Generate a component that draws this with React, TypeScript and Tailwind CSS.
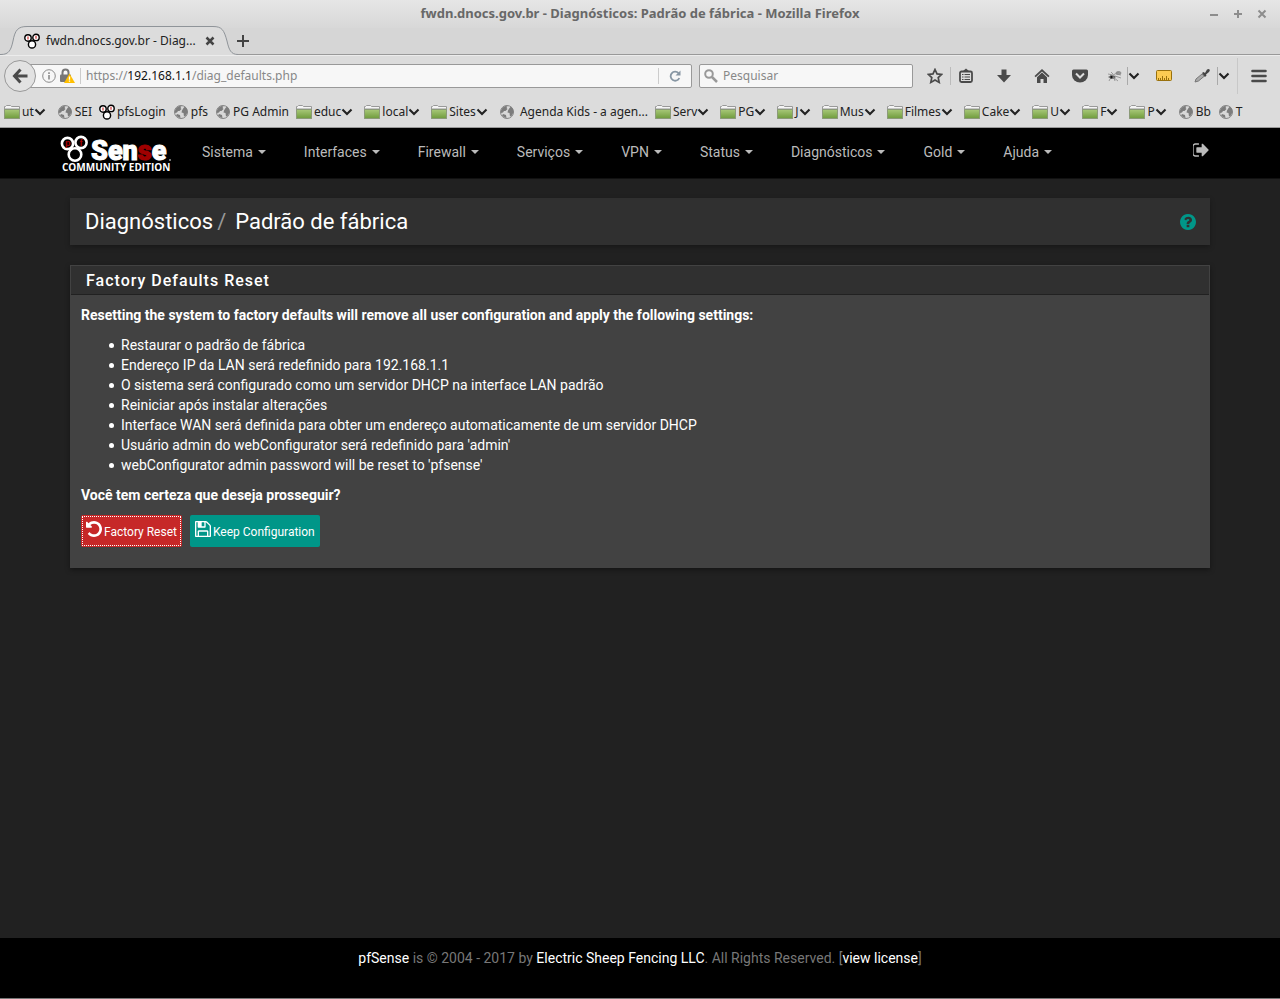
import React from "react";

type IconProps = { className?: string };

const FA = {
  signOut:
    "M704 1440q0 4 1 20t.5 26.5-3 23.5-10 19.5-20.5 6.5h-320q-119 0-203.5-84.5t-84.5-203.5v-704q0-119 84.5-203.5t203.5-84.5h320q13 0 22.5 9.5t9.5 22.5q0 4 1 20t.5 26.5-3 23.5-10 19.5-20.5 6.5h-320q-66 0-113 47t-47 113v704q0 66 47 113t113 47h312l11.5 1 11.5 3 8 5.5 7 9 2 13.5zm928-544q0 26-19 45l-544 544q-19 19-45 19t-45-19-19-45v-288h-448q-26 0-45-19t-19-45v-384q0-26 19-45t45-19h448v-288q0-26 19-45t45-19 45 19l544 544q19 19 19 45z",
  help: "M1024 1376v-192q0-14-9-23t-23-9h-192q-14 0-23 9t-9 23v192q0 14 9 23t23 9h192q14 0 23-9t9-23zm256-672q0-88-55.5-163t-138.5-116-170-41q-243 0-371 213-15 24 8 42l132 100q7 6 19 6 16 0 25-12 53-68 86-92 34-24 86-24 48 0 85.5 26t37.5 59q0 38-20 61t-68 45q-63 28-115.5 86.5t-52.5 125.5v36q0 14 9 23t23 9h192q14 0 23-9t9-23q0-19 21.5-49.5t54.5-49.5q32-18 49-28.5t46-35 44.5-48 28-60.5 12.5-81zm384 192q0 209-103 385.5t-279.5 279.5-385.5 103-385.5-103-279.5-279.5-103-385.5 103-385.5 279.5-279.5 385.5-103 385.5 103 279.5 279.5 103 385.5z",
  undo: "M1664 896q0 156-61 298t-164 245-245 164-298 61q-172 0-327-72.5t-264-204.5q-7-10-6.5-22.5t8.5-20.5l137-138q10-9 25-9 16 2 23 12 73 95 179 147t225 52q104 0 198.5-40.5t163.5-109.5 109.5-163.5 40.5-198.5-40.5-198.5-109.5-163.5-163.5-109.5-198.5-40.5q-98 0-188 35.5t-160 101.5l137 138q31 30 14 69-17 40-59 40h-448q-26 0-45-19t-19-45v-448q0-42 40-59 39-17 69 14l130 129q107-101 244.5-156.5t284.5-55.5q156 0 298 61t245 164 164 245 61 298z",
  save: "M512 1536h768v-384h-768v384zm896 0h128v-896q0-14-10-38.5t-20-34.5l-281-281q-10-10-34-20t-39-10v416q0 40-28 68t-68 28h-576q-40 0-68-28t-28-68v-416h-128v1280h128v-416q0-40 28-68t68-28h832q40 0 68 28t28 68v416zm-384-928v-320q0-13-9.5-22.5t-22.5-9.5h-192q-13 0-22.5 9.5t-9.5 22.5v320q0 13 9.5 22.5t22.5 9.5h192q13 0 22.5-9.5t9.5-22.5zm640 32v928q0 40-28 68t-68 28h-1344q-40 0-68-28t-28-68v-1344q0-40 28-68t68-28h928q40 0 88 20t76 48l280 280q28 28 48 76t20 88z",
};

function Fa({ d, className }: { d: string; className?: string }) {
  return (
    <svg viewBox="128 128 1536 1536" className={className} fill="currentColor" aria-hidden="true">
      <path d={d} />
    </svg>
  );
}

function Rings({ className }: IconProps) {
  return (
    <svg viewBox="0 0 16 16" className={className} fill="#fff" stroke="#000" strokeWidth="1.4" aria-hidden="true">
      <circle cx="8" cy="11.4" r="3.6" />
      <circle cx="4" cy="5" r="3.2" />
      <circle cx="12" cy="4.4" r="3.2" />
      <path d="M4 3.500v3M12 2.800v3" stroke="#c33" strokeWidth="1.2" />
    </svg>
  );
}

function Folder() {
  return (
    <svg viewBox="0 0 16 14" className="h-3.5 w-4 shrink-0" aria-hidden="true">
      <defs>
        <linearGradient id="folderGreen" x1="0" y1="0" x2="0" y2="1">
          <stop offset="0" stopColor="#a8c878" />
          <stop offset="1" stopColor="#6f9b3c" />
        </linearGradient>
      </defs>
      <path d="M.5 13.500V1.500h1l1-1h4l1 1h8v12z" fill="#f4f4f4" stroke="#999" />
      <path d="M1 3.500h14" stroke="#c5c5c5" />
      <path d="M.5 4.500h15v9H.5z" fill="url(#folderGreen)" stroke="#8b9a78" />
    </svg>
  );
}

function Globe() {
  return (
    <svg viewBox="0 0 16 16" className="h-4 w-4 shrink-0" aria-hidden="true">
      <circle cx="8" cy="8" r="6.500" fill="#d8d8d8" stroke="#858585" />
      <path
        d="M2 6.500q1-3.500 4.500-4.500l2 .5-1 1.500 1 1-2 2-1.500 0-1 1.500-2 .5zM9 6.500l1.500-2.500 1.500-1.500q2.500 2 2.500 5.500l-1.500 3.500-2 1-.5-3.500-2-.5zM4 10l3 1 .5 3-2-.5-2.500-2z"
        fill="#7c7c7c"
      />
    </svg>
  );
}

function Chevron() {
  return (
    <svg viewBox="0 0 12 8" className="h-2 w-3 shrink-0" fill="none" stroke="#222" strokeWidth="2.100" aria-hidden="true">
      <path d="M1.500 1.500L6 6l4.500-4.500" />
    </svg>
  );
}

type Bookmark = { label: string; kind: "folder" | "globe" | "rings" };
const bookmarks: Bookmark[] = [
  { label: "ut", kind: "folder" },
  { label: "SEI", kind: "globe" },
  { label: "pfsLogin", kind: "rings" },
  { label: "pfs", kind: "globe" },
  { label: "PG Admin", kind: "globe" },
  { label: "educ", kind: "folder" },
  { label: "local", kind: "folder" },
  { label: "Sites", kind: "folder" },
  { label: "\u00a0Agenda Kids - a agen...", kind: "globe" },
  { label: "Serv", kind: "folder" },
  { label: "PG", kind: "folder" },
  { label: "J", kind: "folder" },
  { label: "Mus", kind: "folder" },
  { label: "Filmes", kind: "folder" },
  { label: "Cake", kind: "folder" },
  { label: "U", kind: "folder" },
  { label: "F", kind: "folder" },
  { label: "P", kind: "folder" },
  { label: "Bb", kind: "globe" },
  { label: "T", kind: "globe" },
];

function TitleBar() {
  return (
    <div className="flex h-7 items-center bg-linear-to-b from-[#e6e6e6] to-[#d8d8d8] px-2">
      <div className="w-16" />
      <div className="flex-1 text-center text-[13px] font-bold text-[#686868]">
        fwdn.dnocs.gov.br - Diagnósticos: Padrão de fábrica - Mozilla Firefox
      </div>
      <div className="flex w-16 items-center justify-end gap-3.5 pr-[5px] text-[#8d8d8d]">
        {[
          ["Minimizar", "M1 6h8"],
          ["Maximizar", "M1 5h8M5 1v8"],
          ["Fechar", "M1.500 1.500l7 7M8.500 1.500l-7 7"],
        ].map(([name, d]) => (
          <button key={name} aria-label={name} className="flex">
            <svg viewBox="0 0 10 10" className="size-2.5" stroke="currentColor" strokeWidth="2">
              <path d={d} />
            </svg>
          </button>
        ))}
      </div>
    </div>
  );
}

function TabStrip() {
  return (
    <div className="flex h-[27px] bg-[#d6d6d6]">
      <div className="relative w-[238px]">
        <svg viewBox="0 0 238 29" className="absolute bottom-0 left-0 h-[29px] w-full" aria-hidden="true">
          <path
            d="M0 28.500H1C9 28.500 11 24 13 15 15 4 18 .5 27 .5H213C222 .5 224 4 227 15 229 24 231 28.500 238 28.500V29H0z"
            fill="#dcdcdc"
          />
          <path
            d="M0 28.500H1C9 28.500 11 24 13 15 15 4 18 .5 27 .5H213C222 .5 224 4 227 15 229 24 231 28.500 238 28.500"
            fill="none"
            stroke="#8f9499"
          />
        </svg>
        <div className="relative flex h-[26px] items-center pl-6">
          <Rings className="size-4" />
          <span className="ml-1.5 w-[155px] text-xs">fwdn.dnocs.gov.br - Diag...</span>
          <button aria-label="Fechar aba" className="ml-1 flex">
            <svg viewBox="0 0 10 10" className="size-2.5" stroke="#444" strokeWidth="2.500">
              <path d="M1.500 1.500l7 7M8.500 1.500l-7 7" />
            </svg>
          </button>
        </div>
      </div>
      <div className="flex flex-1 items-center border-b border-[#999]">
        <button aria-label="Nova aba" className="-ml-0.5 flex">
          <svg viewBox="0 0 14 14" className="size-3.5" stroke="#444" strokeWidth="2">
            <path d="M1 7h12M7 1v12" />
          </svg>
        </button>
      </div>
    </div>
  );
}

function ToolbarIcons() {
  return (
    <div className="flex items-center text-[#4a4a4a]">
      <button aria-label="Favoritar" className="ml-3.5 flex">
        <svg viewBox="0 0 16 16" className="size-4" fill="none" stroke="currentColor" strokeWidth="1.700">
          <path d="M8 1.500l2 4.400 4.700.5-3.500 3.200 1 4.800L8 12l-4.200 2.400 1-4.800L1.300 6.400l4.700-.5z" />
        </svg>
      </button>
      <div className="ml-[7px] h-[18px] w-px bg-[#bbb]" />
      <button aria-label="Mostrar favoritos" className="ml-[7px] flex">
        <svg viewBox="0 0 16 16" className="size-4" fill="none" stroke="currentColor" strokeWidth="1.800">
          <rect x="2" y="3.500" width="12" height="10.500" rx="1.500" />
          <path d="M4 6.500h1.500M6.500 6.500H12M4 9h1.500M6.500 9H12M4 11.500h1.500M6.500 11.500H12" strokeWidth="1.200" />
          <path d="M4.500 3.500L8 .5l3.500 3z" fill="currentColor" stroke="none" />
        </svg>
      </button>
      <button aria-label="Downloads" className="ml-[22px] flex">
        <svg viewBox="0 0 16 16" className="size-4" fill="currentColor">
          <path d="M5.500 1.500h5V7H15l-7 7.500L1 7h4.500z" />
        </svg>
      </button>
      <button aria-label="Página inicial" className="ml-[22px] flex">
        <svg viewBox="0 0 16 16" className="size-4" fill="currentColor">
          <path d="M8 1l7.500 7-1.200 1.200L8 3.400 1.700 9.200.5 8z" />
          <path d="M8 4.500l5 4.700V15H9.500v-4h-3v4H3V9.200z" />
        </svg>
      </button>
      <button aria-label="Pocket" className="ml-[22px] flex">
        <svg viewBox="0 0 16 16" className="size-4">
          <path d="M1.500 1.500h13q1.500 0 1.500 1.500v4a8 7.500 0 0 1-16 0V3q0-1.500 1.500-1.500z" fill="currentColor" />
          <path d="M4 5.500l4 4 4-4" fill="none" stroke="#ddd" strokeWidth="2" />
        </svg>
      </button>
      <button aria-label="Firebug" className="ml-[19px] flex">
        <svg viewBox="0 0 16 16" className="size-4" fill="none" stroke="#888" strokeWidth=".8">
          <ellipse cx="5.500" cy="9" rx="3" ry="1.800" fill="#666" stroke="none" />
          <circle cx="4" cy="9" r="1.500" fill="#111" stroke="none" />
          <ellipse cx="11.500" cy="5" rx="2.500" ry="1.500" fill="#999" />
          <path d="M1 6l5 1 6-3M6 9l5 4M8 8l6 2M3 11l-1 2M6 6L4 4M9 6l5 1M1 9h3M7 10l1 3" />
        </svg>
      </button>
      <div className="ml-1 h-[18px] w-px bg-[#aaa]" />
      <Chevron />
      <button aria-label="Régua" className="ml-4 flex">
        <svg viewBox="0 0 16 16" className="size-4">
          <rect x=".5" y="2.500" width="15" height="10" rx="1" fill="#fccb52" stroke="#98700d" />
          <path d="M2.500 12V10M4.500 12V10M6.500 12V8M8.500 12V10M10.500 12V8M12.500 12V10" stroke="#98700d" />
        </svg>
      </button>
      <button aria-label="Conta-gotas" className="ml-[22px] flex">
        <svg viewBox="0 0 16 16" className="size-4">
          <path d="M1 14l1-3 6-5 2.500 2-6 5z" fill="#aaa" stroke="#777" />
          <path d="M8 5l1.500-1L11 5l2-3.500q2-1 2.500 0 .8 1-.5 2.500L12 6.500l.5 1-1.500 1.500z" fill="#444" />
        </svg>
      </button>
      <div className="ml-[7px] h-[18px] w-px bg-[#aaa]" />
      <Chevron />
      <div className="ml-[7px] h-9 w-px bg-[#c8c8c8]" />
      <button aria-label="Menu" className="ml-[13px] flex">
        <svg viewBox="0 0 16 14" className="h-3.5 w-4" stroke="currentColor" strokeWidth="2.600" strokeLinecap="round">
          <path d="M1.500 2h13M1.500 7h13M1.500 12h13" />
        </svg>
      </button>
    </div>
  );
}

function NavBar() {
  return (
    <div className="flex h-[41px] items-center border-t border-[#ececec] bg-[#dcdcdc] pr-[13px] pl-1">
      <button
        aria-label="Voltar"
        className="z-10 flex size-8 shrink-0 items-center justify-center rounded-full border border-[#999] bg-[#e2e2e2]"
      >
        <svg viewBox="0 0 16 16" className="size-4" fill="none" stroke="#4a4a4a" strokeWidth="3">
          <path d="M8.500 1.500L2.500 8l6 6.500M3 8h12.500" />
        </svg>
      </button>
      <div className="-ml-2 flex h-6 flex-1 items-center rounded-xs border border-[#999] bg-[#f7f7f7] pl-[13px] text-xs">
        <svg viewBox="0 0 14 14" className="size-3.5" fill="none" stroke="#8a8a8a" aria-hidden="true">
          <circle cx="7" cy="7" r="6.300" />
          <path d="M7 6v4.500M7 3.300V5" strokeWidth="1.600" />
        </svg>
        <svg viewBox="0 0 15 16" className="ml-1 h-4 w-[15px]" aria-hidden="true">
          <path d="M2.500 7V4.500a3 3 0 0 1 6 0V7" fill="none" stroke="#777" strokeWidth="2" />
          <rect x="0" y="6.500" width="11" height="7.500" rx="1" fill="#777" />
          <path d="M9.500 5.500L15 15H4z" fill="#ffbf00" />
          <path d="M9.500 8.500v3.200M9.500 12.500v1.300" stroke="#fff" strokeWidth="1.300" />
        </svg>
        <div className="mr-[5px] ml-[5px] h-4 w-px bg-[#ccc]" />
        <span className="flex-1 text-[#888]">
          https://<span className="text-[#111]">192.168.1.1</span>/diag_defaults.php
        </span>
        <div className="h-4 w-px bg-[#ccc]" />
        <button aria-label="Recarregar" className="flex px-2.5">
          <svg viewBox="0 0 12 12" className="size-3" fill="none" stroke="#8796a3" strokeWidth="1.800">
            <path d="M9.500 3.200A4.500 4.500 0 1 0 10.300 8" />
            <path d="M11.500.5v5h-5z" fill="#8796a3" stroke="none" />
          </svg>
        </button>
      </div>
      <label className="ml-[7px] flex h-6 w-[214px] items-center rounded-xs border border-[#999] bg-[#f7f7f7] pl-1">
        <svg viewBox="0 0 14 14" className="size-3.5 shrink-0" fill="none" stroke="#999" strokeWidth="2" aria-hidden="true">
          <circle cx="5" cy="5" r="3.800" />
          <path d="M8 8l5 5" strokeWidth="2.500" />
        </svg>
        <input
          aria-label="Pesquisar"
          placeholder="Pesquisar"
          className="ml-[5px] w-full min-w-0 bg-transparent text-xs outline-none placeholder:text-[#888]"
        />
      </label>
      <ToolbarIcons />
    </div>
  );
}

function BookmarkBar() {
  return (
    <div className="flex h-8 items-center border-b border-[#999] bg-[#dcdcdc] pl-1 text-xs whitespace-nowrap">
      {bookmarks.map((b) =>
        b.kind === "folder" ? (
          <button key={b.label} className="mr-[11px] flex items-center gap-0.5">
            <Folder />
            <span className="flex items-center">
              {b.label}
              <Chevron />
            </span>
          </button>
        ) : (
          <a key={b.label} href="#" className="mr-[7px] flex items-center gap-0.5">
            {b.kind === "globe" ? <Globe /> : <Rings className="size-4" />}
            {b.label}
          </a>
        ),
      )}
    </div>
  );
}

function Logo() {
  return (
    <svg viewBox="0 0 112 38" className="h-[38px] w-28" role="img" aria-label="pfSense Community Edition">
      <g fill="#000" stroke="#fff" strokeWidth="2.600">
        <circle cx="7.500" cy="9.500" r="5.600" />
        <circle cx="21" cy="8.500" r="5.600" />
        <circle cx="15" cy="20.500" r="6.300" />
        <path d="M10 14.500l2 1.500M19.500 13.500l-1.500 2" />
      </g>
      <g fill="#a00" fontFamily="'Liberation Sans', sans-serif" fontWeight="700" fontSize="9">
        <text x="5" y="12">p</text>
        <text x="19.500" y="12">f</text>
      </g>
      <text
        x="31"
        y="26"
        fill="#fff"
        stroke="#fff"
        strokeWidth="1"
        fontFamily="Roboto, sans-serif"
        fontWeight="900"
        fontSize="27"
      >
        Sen
        <tspan fill="#a00000" stroke="#a00000">s</tspan>e
      </text>
      <circle cx="110" cy="26" r="1" fill="#999" />
      <text x="2" y="37" fill="#fff" fontFamily="'Open Sans', sans-serif" fontWeight="700" fontSize="10">
        COMMUNITY EDITION
      </text>
    </svg>
  );
}

const menus = ["Sistema", "Interfaces", "Firewall", "Serviços", "VPN", "Status", "Diagnósticos", "Gold", "Ajuda"];

function SiteNav() {
  return (
    <nav className="flex h-[51px] items-start border-b border-[#111] bg-black pr-[71px] pl-[60px]">
      <a href="#" className="mt-1.5">
        <Logo />
      </a>
      <ul className="ml-[30px] flex flex-1 gap-[38px] pt-3.5 text-sm text-[#bbb]">
        {menus.map((m) => (
          <li key={m}>
            <button className="flex items-center gap-[5px]">
              {m}
              <svg viewBox="0 0 8 4" className="h-1 w-2" fill="currentColor" aria-hidden="true">
                <path d="M0 0h8L4 4z" />
              </svg>
            </button>
          </li>
        ))}
      </ul>
      <a href="#" aria-label="Sair" className="mt-3.5 text-[#bbb]">
        <Fa d={FA.signOut} className="size-4" />
      </a>
    </nav>
  );
}

const settings = [
  "Restaurar o padrão de fábrica",
  "Endereço IP da LAN será redefinido para 192.168.1.1",
  "O sistema será configurado como um servidor DHCP na interface LAN padrão",
  "Reiniciar após instalar alterações",
  "Interface WAN será definida para obter um endereço automaticamente de um servidor DHCP",
  "Usuário admin do webConfigurator será redefinido para 'admin'",
  "webConfigurator admin password will be reset to 'pfsense'",
];

export default function App() {
  return (
    <div className="flex min-h-screen flex-col bg-[#212121]">
      <header className="font-['Noto_Sans',sans-serif] text-[#222]">
        <TitleBar />
        <TabStrip />
        <NavBar />
        <BookmarkBar />
      </header>
      <div className="flex flex-1 flex-col font-[Roboto,sans-serif] text-sm text-white">
        <SiteNav />
        <main className="flex-1 px-[70px] pt-[19px]">
          <div className="flex h-[47px] items-center justify-between bg-[#303030] pr-3.5 pl-[15px] shadow-[0_2px_5px_rgba(0,0,0,0.3)]">
            <h1 className="text-[22px]">
              Diagnósticos<span className="mr-[9px] ml-1 text-[#999]">/</span>Padrão de fábrica
            </h1>
            <a href="#" aria-label="Ajuda" className="text-[#009688]">
              <Fa d={FA.help} className="size-4" />
            </a>
          </div>
          <section className="mt-5 border border-[#424242] bg-[#424242] shadow-[0_2px_5px_rgba(0,0,0,0.4)]">
            <h2 className="border-b border-[#212121] bg-[#303030] px-[15px] pt-[5px] pb-[3px] text-base leading-5 font-medium tracking-[1px]">
              Factory Defaults Reset
            </h2>
            <div className="px-2.5 pt-2.5 pb-5">
              <p className="font-bold">
                Resetting the system to factory defaults will remove all user configuration and apply the following
                settings:
              </p>
              <ul className="my-2.5 pl-7">
                {settings.map((s) => (
                  <li
                    key={s}
                    className="flex items-center gap-[7px] before:size-[5px] before:shrink-0 before:rounded-full before:bg-white before:content-['']"
                  >
                    {s}
                  </li>
                ))}
              </ul>
              <p className="font-bold">Você tem certeza que deseja prosseguir?</p>
              <div className="mt-2.5 flex gap-2 text-xs">
                <button className="flex h-8 items-center gap-0.5 rounded-xs bg-[#c62828] px-[5px] pt-0.5 outline-1 -outline-offset-2 outline-dotted outline-white">
                  <Fa d={FA.undo} className="-mt-1.5 size-4" />
                  Factory Reset
                </button>
                <button className="flex h-8 items-center gap-0.5 rounded-xs bg-[#009688] px-[5px] pt-0.5">
                  <Fa d={FA.save} className="-mt-1.5 size-4" />
                  Keep Configuration
                </button>
              </div>
            </div>
          </section>
        </main>
        <footer className="h-[61px] border-b border-[#777] bg-black pt-2.5 text-center text-[#777]">
          <a href="#" className="text-white">pfSense</a> is © 2004 - 2017 by{" "}
          <a href="#" className="text-white">Electric Sheep Fencing LLC</a>. All Rights Reserved. [
          <a href="#" className="text-white">view license</a>]
        </footer>
      </div>
    </div>
  );
}
